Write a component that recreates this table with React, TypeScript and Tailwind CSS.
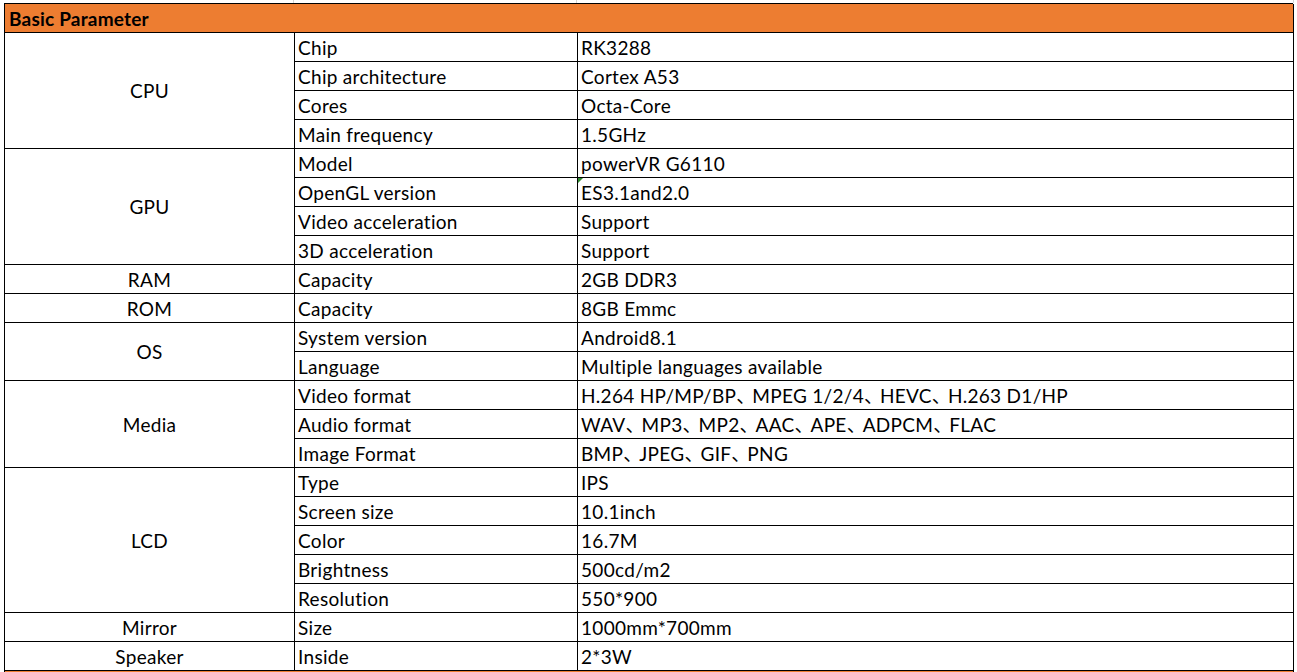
import React from "react";

type Group = { name: string; rows: [string, string][] };

const groups: Group[] = [
  {
    name: "CPU",
    rows: [
      ["Chip", "RK3288"],
      ["Chip architecture", "Cortex A53"],
      ["Cores", "Octa-Core"],
      ["Main frequency", "1.5GHz"],
    ],
  },
  {
    name: "GPU",
    rows: [
      ["Model", "powerVR G6110"],
      ["OpenGL version", "ES3.1and2.0"],
      ["Video acceleration", "Support"],
      ["3D acceleration", "Support"],
    ],
  },
  { name: "RAM", rows: [["Capacity", "2GB DDR3"]] },
  { name: "ROM", rows: [["Capacity", "8GB Emmc"]] },
  {
    name: "OS",
    rows: [
      ["System version", "Android8.1"],
      ["Language", "Multiple languages available"],
    ],
  },
  {
    name: "Media",
    rows: [
      ["Video format", "H.264 HP/MP/BP、MPEG 1/2/4、HEVC、H.263 D1/HP"],
      ["Audio format", "WAV、MP3、MP2、AAC、APE、ADPCM、FLAC"],
      ["Image Format", "BMP、JPEG、GIF、PNG"],
    ],
  },
  {
    name: "LCD",
    rows: [
      ["Type", "IPS"],
      ["Screen size", "10.1inch"],
      ["Color", "16.7M"],
      ["Brightness", "500cd/m2"],
      ["Resolution", "550*900"],
    ],
  },
  { name: "Mirror", rows: [["Size", "1000mm*700mm"]] },
  { name: "Speaker", rows: [["Inside", "2*3W"]] },
];

const font = {
  fontFamily: "Lato, 'Noto Sans CJK SC', sans-serif",
};

function Value({ text }: { text: string }) {
  const parts = text.split("、");
  return (
    <>
      {parts.map((p, i) => (
        <React.Fragment key={i}>
          {p}
          {i < parts.length - 1 && <span className="tracking-[-3px]">、</span>}
        </React.Fragment>
      ))}
    </>
  );
}

export default function App() {
  const cells: React.ReactNode[] = [];
  let row = 2;
  groups.forEach((g, gi) => {
    const span = g.rows.length;
    cells.push(
      <div
        key={`g${gi}`}
        className="flex items-center justify-center border-r border-b border-black text-[19px] tracking-[0.3px] leading-none"
        style={{ gridColumn: "1", gridRow: `${row} / span ${span}` }}
      >
        {g.name}
      </div>
    );
    g.rows.forEach((r, ri) => {
      const isGreen = g.name === "GPU" && ri === 1;
      cells.push(
        <div
          key={`a${gi}-${ri}`}
          className="flex items-center border-r border-b border-black pl-[3px] text-[19px] tracking-[0.3px] leading-none whitespace-nowrap"
          style={{ gridColumn: "2", gridRow: `${row + ri}` }}
        >
          {r[0]}
        </div>
      );
      cells.push(
        <div
          key={`b${gi}-${ri}`}
          className="relative flex items-center border-r border-b border-black pl-[3px] text-[19px] tracking-[0.3px] leading-none whitespace-nowrap"
          style={{ gridColumn: "3", gridRow: `${row + ri}` }}
        >
          {isGreen && (
            <span className="absolute left-0 top-0 w-0 h-0 border-t-[5px] border-t-[#2e8b2e] border-r-[5px] border-r-transparent" />
          )}
          <span>
            <Value text={r[1]} />
          </span>
        </div>
      );
    });
    row += span;
  });

  return (
    <div className="w-[1297px] h-[672px] overflow-hidden bg-white text-black" style={font}>
      <div className="relative h-[3px] w-full">
        <div className="absolute left-[293px] top-0 h-[3px] w-px bg-[#d4d4d4]" />
        <div className="absolute left-[576px] top-0 h-[3px] w-px bg-[#d4d4d4]" />
        <div className="absolute left-[1293px] top-0 h-[3px] w-px bg-[#d4d4d4]" />
      </div>
      <div className="flex">
        <div className="w-[4px]" />
        <div className="grid grid-cols-[290px_283px_716px] auto-rows-[29px] border-t border-l border-black w-[1289px]">
          <div
            className="flex items-center bg-[#ED7D31] border-r border-b border-black pl-[4px] font-bold text-[19px] tracking-[0.2px] leading-none"
            style={{ gridColumn: "1 / span 3", gridRow: "1" }}
          >
            Basic Parameter
          </div>
          {cells}
          <div
            className="bg-[#ED7D31] border-r border-black"
            style={{ gridColumn: "1 / span 3" }}
          />
        </div>
      </div>
    </div>
  );
}
